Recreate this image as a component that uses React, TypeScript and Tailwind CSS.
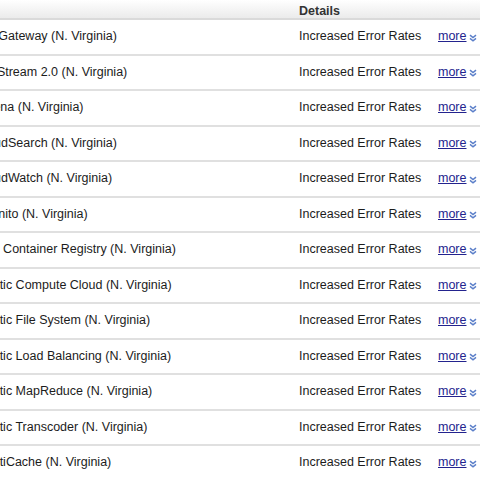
const rows = [
  "Amazon API Gateway",
  "Amazon AppStream 2.0",
  "Amazon Athena",
  "Amazon CloudSearch",
  "Amazon CloudWatch",
  "Amazon Cognito",
  "Amazon EC2 Container Registry",
  "Amazon Elastic Compute Cloud",
  "Amazon Elastic File System",
  "Amazon Elastic Load Balancing",
  "Amazon Elastic MapReduce",
  "Amazon Elastic Transcoder",
  "Amazon ElastiCache",
];

function Chevrons() {
  return (
    <svg width="8" height="8" viewBox="0 0 8 8" className="ml-[3px] mt-[2px]">
      <path d="M1 1.2 L4 3.6 L7 1.2" fill="none" stroke="#5b7fc9" strokeWidth="1.5" />
      <path d="M1 4.4 L4 6.8 L7 4.4" fill="none" stroke="#5b7fc9" strokeWidth="1.5" />
    </svg>
  );
}

export default function App() {
  return (
    <div className="w-[480px] h-[480px] overflow-hidden bg-white text-[12.5px] text-[#1c1c1c] font-['Liberation_Sans',Arial,sans-serif]">
      <div className="grid grid-cols-[299px_139px_1fr] h-[20px] items-end pb-[1px] bg-gradient-to-b from-white to-[#ebebeb] border-b-2 border-[#dadada]">
        <div />
        <div className="font-bold text-[#333] leading-none">Details</div>
        <div />
      </div>
      {rows.map((name) => (
        <div
          key={name}
          className="grid grid-cols-[299px_139px_1fr] h-[35.5px] items-center border-b-2 border-[#e0e0e0]"
        >
          <div className="overflow-hidden whitespace-nowrap">
            <span className="ml-[-74px] inline-block">{name} (N. Virginia)</span>
          </div>
          <div className="whitespace-nowrap">Increased Error Rates</div>
          <div className="flex items-center whitespace-nowrap">
            <a href="#" className="text-[#23238e] underline">
              more
            </a>
            <Chevrons />
          </div>
        </div>
      ))}
    </div>
  );
}
